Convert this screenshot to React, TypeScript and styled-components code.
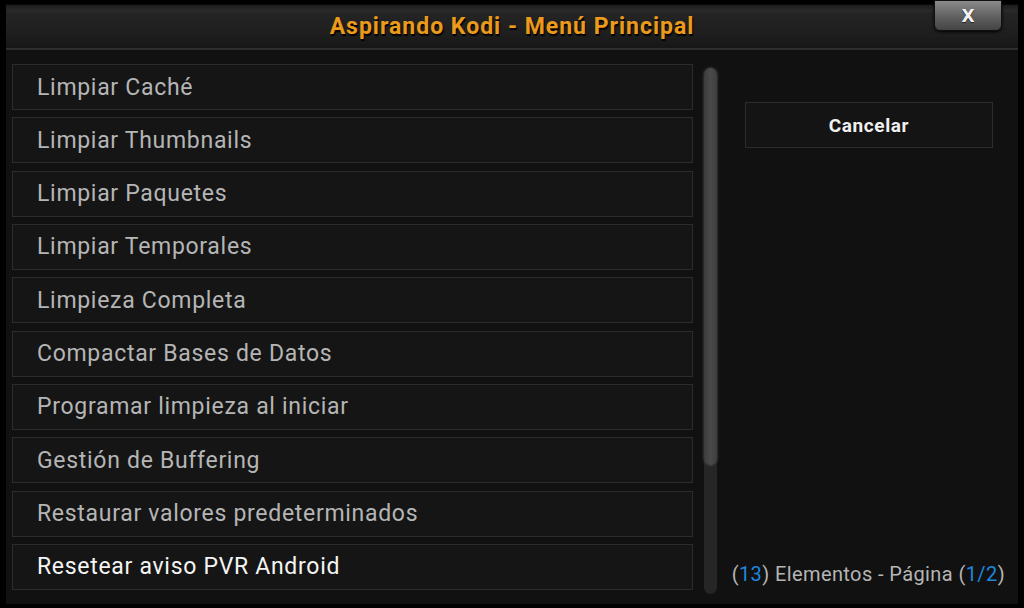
import styled, { createGlobalStyle } from "styled-components";

const GlobalStyle = createGlobalStyle`
  html, body {
    margin: 0;
    padding: 0;
    background: #000;
  }
  #root {
    width: 1024px;
    height: 608px;
  }
`;

const Screen = styled.div`
  width: 1024px;
  height: 608px;
  box-sizing: border-box;
  padding: 4px 6px 4px 6px;
  background: #000;
  font-family: Roboto, "Liberation Sans", sans-serif;
`;

const Dialog = styled.div`
  position: relative;
  height: 100%;
  display: flex;
  flex-direction: column;
  background: #111111;
`;

const Header = styled.div`
  height: 46px;
  display: flex;
  align-items: center;
  justify-content: center;
  padding-bottom: 3px;
  box-sizing: border-box;
  background: linear-gradient(#1c1c1c 0px, #2b2b2b 6px, #242424 8px, #1e1e1e 30px, #151515 100%);
  border-top: 1px solid #0a0a0a;
  box-shadow: inset 0 -2px 0 #2e2e2e;
`;

const Title = styled.h1`
  margin: 0;
  font-size: 23px;
  font-weight: 700;
  color: #eb9a1c;
  letter-spacing: 1px;
  text-shadow: 1px 2px 1px #000;
`;

const CloseButton = styled.button`
  position: absolute;
  top: -4px;
  right: 16px;
  width: 68px;
  height: 31px;
  border: 1px solid #111;
  border-radius: 0 0 6px 6px;
  background: linear-gradient(#8a8a8a, #5c5c5c 60%, #444);
  color: #f2f2f2;
  font-family: "DejaVu Sans", sans-serif;
  font-size: 17px;
  font-weight: 700;
  padding-top: 2px;
  box-shadow: 0 1px 3px #000;
  text-shadow: 0 1px 1px #222;
`;

const Body = styled.div`
  flex: 1;
  display: flex;
  padding: 14px 0 10px 6px;
`;

const List = styled.div`
  width: 681px;
  display: flex;
  flex-direction: column;
  gap: 7.33px;
`;

const Item = styled.div<{ $active?: boolean }>`
  height: 46px;
  box-sizing: border-box;
  border: 1px solid #2c2c2c;
  background: #151515;
  display: flex;
  align-items: center;
  padding-left: 24px;
  font-size: 23px;
  letter-spacing: 0.7px;
  color: ${(p) => (p.$active ? "#f4f4f4" : "#b5b5b5")};
`;

const ScrollTrack = styled.div`
  width: 13px;
  margin: 4px 0 0 11px;
  border-radius: 7px;
  background: #262626;
  display: flex;
  flex-direction: column;
`;

const ScrollThumb = styled.div`
  height: 397px;
  border-radius: 7px;
  background: linear-gradient(90deg, #3c3c3c, #4a4a4a 50%, #3e3e3e);
  box-shadow: 0 0 3px #555;
`;

const Side = styled.div`
  flex: 1;
  min-width: 0;
  display: flex;
  flex-direction: column;
  padding: 38px 13px 0 28px;
`;

const CancelButton = styled.button`
  width: 248px;
  height: 46px;
  border: 1px solid #2c2c2c;
  background: #141414;
  color: #f0f0f0;
  font-family: Roboto, "Liberation Sans", sans-serif;
  font-size: 19px;
  letter-spacing: 0.6px;
  font-weight: 700;
`;

const Footer = styled.div`
  margin-top: auto;
  align-self: flex-end;
  white-space: nowrap;
  font-size: 20px;
  letter-spacing: 0.4px;
  color: #b5b5b5;
  padding-bottom: 8px;
`;

const Num = styled.span`
  color: #1f86de;
`;

const items = [
  "Limpiar Caché",
  "Limpiar Thumbnails",
  "Limpiar Paquetes",
  "Limpiar Temporales",
  "Limpieza Completa",
  "Compactar Bases de Datos",
  "Programar limpieza al iniciar",
  "Gestión de Buffering",
  "Restaurar valores predeterminados",
  "Resetear aviso PVR Android",
];

export default function App() {
  return (
    <>
      <GlobalStyle />
      <Screen>
        <Dialog>
          <Header>
            <Title>Aspirando Kodi - Menú Principal</Title>
          </Header>
          <CloseButton>X</CloseButton>
          <Body>
            <List>
              {items.map((label, i) => (
                <Item key={label} $active={i === items.length - 1}>
                  {label}
                </Item>
              ))}
            </List>
            <ScrollTrack>
              <ScrollThumb />
            </ScrollTrack>
            <Side>
              <CancelButton>Cancelar</CancelButton>
              <Footer>
                (<Num>13</Num>) Elementos - Página (<Num>1/2</Num>)
              </Footer>
            </Side>
          </Body>
        </Dialog>
      </Screen>
    </>
  );
}
